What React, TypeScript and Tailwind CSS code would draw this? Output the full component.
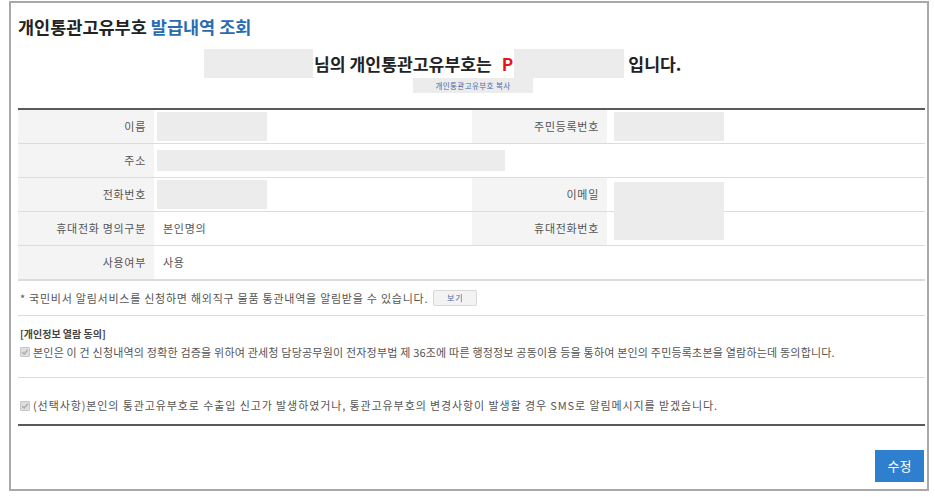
import type { ReactNode } from "react";

const font = { fontFamily: '"Noto Sans CJK KR", "Noto Sans", sans-serif' };

const labelClass =
  "flex items-center justify-end bg-[#f4f4f4] pr-[8px] text-[11px] tracking-[0.7px] text-[#555]";
const valueClass = "flex items-center pl-[9px] text-[11px] tracking-[0.7px] text-[#555]";
const redactClass = "bg-[#ececec]";

function Row({ children, last = false }: { children: ReactNode; last?: boolean }) {
  return (
    <div
      className={
        "grid h-[34px] grid-cols-[136px_318px_135px_318px] " +
        (last ? "" : "border-b border-[#dcdcdc]")
      }
    >
      {children}
    </div>
  );
}

function CheckMark() {
  return (
    <span className="mr-[3px] inline-flex h-[10px] w-[10px] shrink-0 items-center justify-center rounded-[1px] border border-[#c8c8c8] bg-[#dedede]">
      <svg width="8" height="8" viewBox="0 0 8 8">
        <path d="M1.2 4.2 L3.2 6 L6.8 1.8" fill="none" stroke="#a8a8a8" strokeWidth="1.3" />
      </svg>
    </span>
  );
}

export default function App() {
  return (
    <div className="h-[497px] w-[935px] bg-white pl-[9px] pt-[1px]" style={font}>
      <div className="h-[490px] w-[920px] border-2 border-[#a9a9a9] pl-[7px] pr-[1px]">
        <h1 className="pt-[12px] text-[17.5px] font-bold leading-[24px] text-[#222]">
          개인통관고유부호 <span className="text-[#2a6cb3]">발급내역 조회</span>
        </h1>

        <div className="mt-[10px] flex h-[29px] items-center">
          <span className={"ml-[186px] h-[29px] w-[109px] " + redactClass} />
          <span className="ml-[1px] text-[17.2px] font-bold text-[#222]">
            님의 개인통관고유부호는
          </span>
          <span className="ml-[10px] text-[17.2px] font-bold text-[#e8141b]">P</span>
          <span className={"ml-[1px] h-[29px] w-[110px] " + redactClass} />
          <span className="ml-[4px] text-[17.2px] font-bold text-[#222]">입니다.</span>
        </div>

        <div className="flex justify-center">
          <button className="ml-[2px] h-[15px] w-[120px] bg-[#ececec] text-[7.5px] leading-[15px] tracking-[0.4px] text-[#4a6aa8]">
            개인통관고유부호 복사
          </button>
        </div>

        <div className="mt-[15px] w-[907px] border-t-2 border-[#5a5a5a]">
          <Row>
            <div className={labelClass}>이름</div>
            <div className="flex items-center pl-[3px]">
              <span className={"h-[29px] w-[110px] " + redactClass} />
            </div>
            <div className={labelClass}>주민등록번호</div>
            <div className="flex items-center pl-[7px]">
              <span className={"h-[29px] w-[110px] " + redactClass} />
            </div>
          </Row>
          <Row>
            <div className={labelClass}>주소</div>
            <div className="col-span-3 flex items-center pl-[3px]">
              <span className={"h-[21px] w-[348px] " + redactClass} />
            </div>
          </Row>
          <Row>
            <div className={labelClass}>전화번호</div>
            <div className="flex items-center pl-[3px]">
              <span className={"h-[29px] w-[110px] " + redactClass} />
            </div>
            <div className={labelClass}>이메일</div>
            <div className="relative">
              <span className={"absolute left-[7px] top-[4px] h-[58px] w-[110px] " + redactClass} />
            </div>
          </Row>
          <Row>
            <div className={labelClass}>휴대전화 명의구분</div>
            <div className={valueClass}>본인명의</div>
            <div className={labelClass}>휴대전화번호</div>
            <div />
          </Row>
          <Row>
            <div className={labelClass}>사용여부</div>
            <div className={"col-span-3 " + valueClass}>사용</div>
          </Row>
          <div className="flex h-[36px] items-center border-y border-[#dcdcdc] pl-[2px] text-[11px] tracking-[0.75px] text-[#555]">
            * 국민비서 알림서비스를 신청하면 해외직구 물품 통관내역을 알림받을 수 있습니다.
            <button className="ml-[5px] h-[16px] w-[44px] rounded-[2px] border border-[#d8d8d8] bg-[#f3f3f3] text-[8px] text-[#4a6aa8]">
              보기
            </button>
          </div>
          <div className="h-[62px] border-b border-[#dcdcdc] pl-[2px] pt-[10px] text-[11px] text-[#555]">
            <p className="text-[10px] font-bold text-[#444]">[개인정보 열람 동의]</p>
            <p className="mt-[3px] flex items-center text-[11px] tracking-[0.2px]">
              <CheckMark />
              본인은 이 건 신청내역의 정확한 검증을 위하여 관세청 담당공무원이 전자정부법 제 36조에 따른 행정정보 공동이용 등을 통하여 본인의 주민등록초본을 열람하는데 동의합니다.
            </p>
          </div>
          <div className="flex h-[48px] items-center border-b-2 border-[#5a5a5a] pl-[2px] pt-[9px] text-[11px] tracking-[0.9px] text-[#555]">
            <CheckMark />
            (선택사항)본인의 통관고유부호로 수출입 신고가 발생하였거나, 통관고유부호의 변경사항이 발생할 경우 SMS로 알림메시지를 받겠습니다.
          </div>
        </div>

        <div className="mt-[24px] flex w-[906px] justify-end">
          <button className="h-[32px] w-[49px] bg-[#2f7fcf] text-[13px] text-white">수정</button>
        </div>
      </div>
    </div>
  );
}
